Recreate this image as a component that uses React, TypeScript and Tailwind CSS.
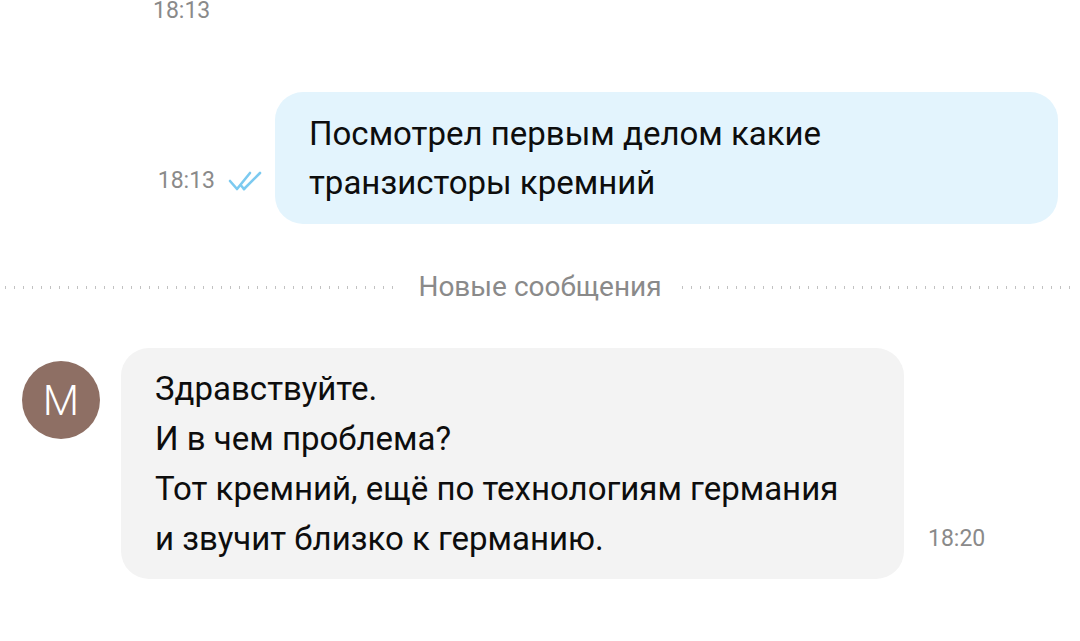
import React from 'react'

const font = { fontFamily: 'Roboto, "Noto Sans", sans-serif' }

function DoubleCheck() {
  return (
    <svg width="36" height="22" viewBox="0 0 36 22" fill="none" stroke="#7ccaf0" strokeWidth={2.6} strokeLinecap="round" strokeLinejoin="round">
      <path d="M2 11l7 8L22 3" />
      <path d="M16 19L32 3" />
      <path d="M13 15.5l3 3.5" />
    </svg>
  )
}

function Dots() {
  return <div className="flex-1 h-[3px] bg-[linear-gradient(to_right,#c2c2c2_1.5px,transparent_1.5px)] bg-[length:9px_3px] bg-repeat-x" />
}

export default function App() {
  return (
    <div className="w-[1080px] h-[641px] bg-white overflow-hidden text-[#0d0d0d]" style={font}>
      <div className="pl-[153px] -mt-[4px] text-[23px] leading-[30px] text-[#8a8a8a]">18:13</div>

      <div className="flex items-end justify-end pr-[22px] mt-[66px]">
        <div className="flex items-center gap-[13px] mr-[11px] mb-[28px]">
          <span className="text-[23px] leading-[30px] text-[#8a8a8a]">18:13</span>
          <DoubleCheck />
        </div>
        <div className="w-[783px] rounded-[28px] bg-[#e3f4fd] px-[34px] pt-[17px] pb-[17px] text-[33px] leading-[49px]">
          Посмотрел первым делом какие
          <br />
          транзисторы кремний
        </div>
      </div>

      <div className="flex items-center mt-[47px] px-[5px] gap-[20px]">
        <Dots />
        <span className="text-[28px] leading-[32px] text-[#8a8a8a]">Новые сообщения</span>
        <Dots />
      </div>

      <div className="flex items-end mt-[45px] pl-[22px]">
        <div className="self-start mt-[13px] w-[78px] h-[78px] rounded-full bg-[#8e6f64] flex items-center justify-center text-white text-[42px] font-light">
          M
        </div>
        <div className="ml-[21px] w-[783px] rounded-[28px] bg-[#f3f3f3] pl-[34px] pr-[24px] pt-[16px] pb-[15px] text-[33px] leading-[50px]">
          Здравствуйте.
          <br />
          И в чем проблема?
          <br />
          Тот кремний, ещё по технологиям германия
          <br />
          и звучит близко к германию.
        </div>
        <span className="ml-[24px] mb-[25px] text-[23px] leading-[30px] text-[#8a8a8a]">18:20</span>
      </div>
    </div>
  )
}
